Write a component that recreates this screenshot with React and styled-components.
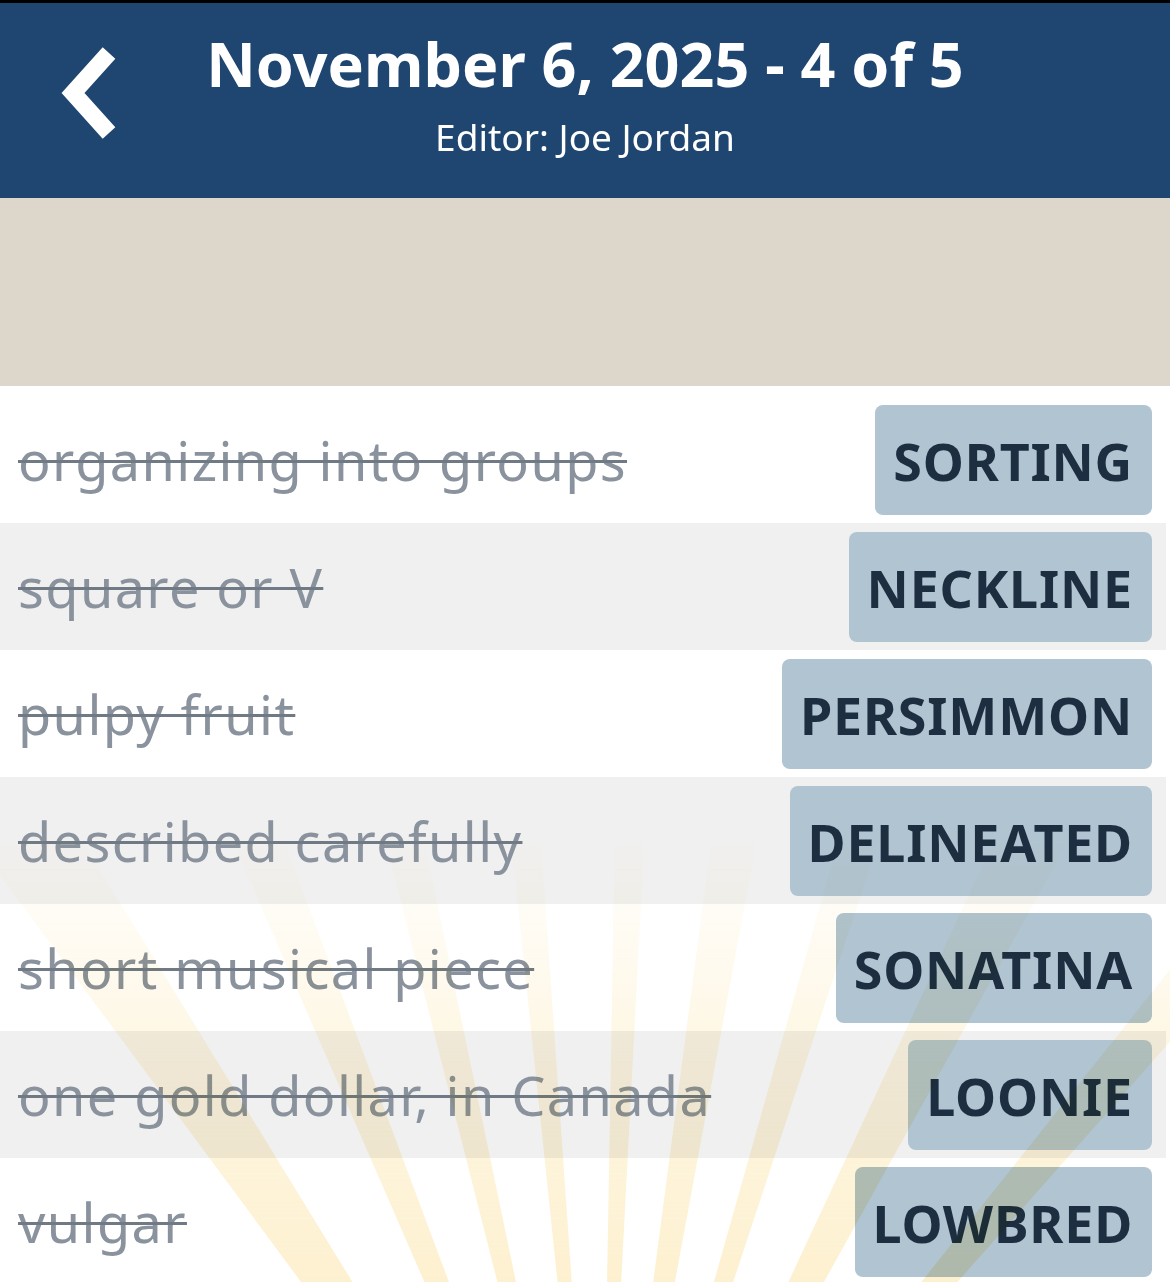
import styled, { createGlobalStyle } from "styled-components";

const GlobalStyle = createGlobalStyle`
  * { box-sizing: border-box; }
  body {
    margin: 0;
    background: #ffffff;
    font-family: "Noto Sans", "Open Sans", sans-serif;
  }
`;

const clues = [
  { clue: "organizing into groups", answer: "SORTING" },
  { clue: "square or V", answer: "NECKLINE" },
  { clue: "pulpy fruit", answer: "PERSIMMON" },
  { clue: "described carefully", answer: "DELINEATED" },
  { clue: "short musical piece", answer: "SONATINA" },
  { clue: "one gold dollar, in Canada", answer: "LOONIE" },
  { clue: "vulgar", answer: "LOWBRED" },
];

// rays of the sunburst: [angle from straight up, width] in degrees
const rays = [
  [-34, 5],
  [-22, 3],
  [-13, 2.5],
  [-5, 2],
  [2, 2],
  [9, 3],
  [17, 2.5],
  [27, 4],
  [40, 3],
];

const Sunburst = () => {
  const cx = 600;
  const cy = 1300;
  const r = 1500;
  return (
    <RaysSvg viewBox="0 0 1170 900">
      <defs>
        <linearGradient id="fade" x1="0" y1="0" x2="0" y2="900" gradientUnits="userSpaceOnUse">
          <stop offset="0.5" stopColor="#fff" stopOpacity="0" />
          <stop offset="0.75" stopColor="#fff" stopOpacity="0.6" />
          <stop offset="1" stopColor="#fff" stopOpacity="1" />
        </linearGradient>
        <mask id="fadeMask" maskUnits="userSpaceOnUse" x="0" y="0" width="1170" height="900">
          <rect x="0" y="0" width="1170" height="900" fill="url(#fade)" />
        </mask>
      </defs>
      <g mask="url(#fadeMask)">
        {rays.map(([a, w]) => {
          const a1 = ((a - w / 2) * Math.PI) / 180;
          const a2 = ((a + w / 2) * Math.PI) / 180;
          const p1 = [cx + r * Math.sin(a1), cy - r * Math.cos(a1)];
          const p2 = [cx + r * Math.sin(a2), cy - r * Math.cos(a2)];
          return (
            <polygon
              key={a}
              points={`${cx},${cy} ${p1[0]},${p1[1]} ${p2[0]},${p2[1]}`}
              fill="#fbe2a0"
            />
          );
        })}
      </g>
    </RaysSvg>
  );
};

const App = () => {
  return (
    <Page>
      <GlobalStyle />
      <Header>
        <BackButton aria-label="back">
          <svg width="80" height="110" viewBox="0 0 80 110">
            <path
              d="M60 13 L24 53 L60 93"
              fill="none"
              stroke="#ffffff"
              strokeWidth="17"
              strokeLinejoin="miter"
              strokeLinecap="butt"
            />
          </svg>
        </BackButton>
        <HeaderTitle>November 6, 2025 - 4 of 5</HeaderTitle>
        <HeaderSub>Editor: Joe Jordan</HeaderSub>
      </Header>
      <Banner />
      <List>
        {clues.map((c, i) => (
          <Row key={c.answer} $alt={i % 2 === 1}>
            <Clue>{c.clue}</Clue>
            <Answer>{c.answer}</Answer>
          </Row>
        ))}
        <Sunburst />
      </List>
    </Page>
  );
};

const Page = styled.div`
  width: 1170px;
  height: 1282px;
  overflow: hidden;
  border-top: 3px solid #000;
`;

const Header = styled.header`
  position: relative;
  height: 195px;
  background-color: #1f4670;
  color: #ffffff;
  display: flex;
  flex-direction: column;
  align-items: center;
  padding-top: 20px;
`;

const BackButton = styled.button`
  position: absolute;
  left: 49px;
  top: 37px;
  border: 0;
  padding: 0;
  background: transparent;
  line-height: 0;
`;

const HeaderTitle = styled.h1`
  margin: 0;
  font-size: 61px;
  font-weight: 700;
  line-height: 82px;
`;

const HeaderSub = styled.p`
  margin: 0;
  font-size: 37px;
  font-weight: 400;
  line-height: 64px;
`;

const Banner = styled.div`
  height: 188px;
  background-color: #ddd6ca;
`;

const List = styled.div`
  position: relative;
  padding-top: 10px;
`;

const Row = styled.div`
  display: flex;
  align-items: center;
  justify-content: space-between;
  height: 127px;
  margin-right: 4px;
  padding: 9px 14px 8px 18px;
  background-color: ${(p) => (p.$alt ? "#f0f0f0" : "#ffffff")};
`;

const Clue = styled.span`
  font-size: 54px;
  letter-spacing: 1.4px;
  color: #8a939d;
  text-decoration: line-through;
  text-decoration-color: #6f7a84;
  text-decoration-thickness: 3px;
  white-space: nowrap;
`;

const Answer = styled.span`
  height: 110px;
  display: flex;
  align-items: center;
  padding: 0 19px 0 18px;
  border-radius: 8px;
  background-color: #b0c4d1;
  color: #1c2e40;
  font-size: 52px;
  font-weight: 700;
  letter-spacing: 0.8px;
  white-space: nowrap;
`;

const RaysSvg = styled.svg`
  position: absolute;
  left: 0;
  top: 0;
  width: 1170px;
  height: 900px;
  pointer-events: none;
  mix-blend-mode: multiply;
  opacity: 0.5;
`;

export default App;
